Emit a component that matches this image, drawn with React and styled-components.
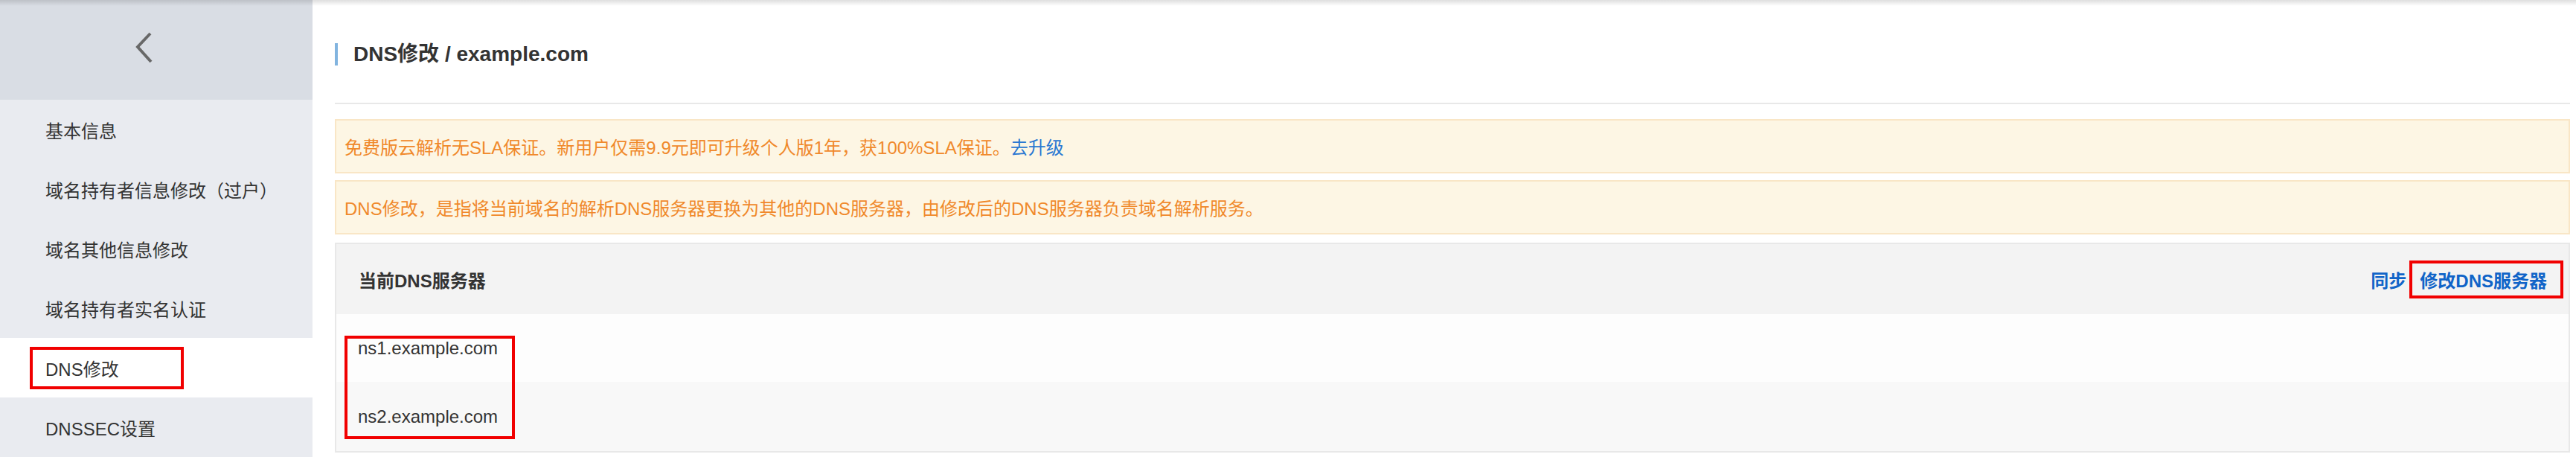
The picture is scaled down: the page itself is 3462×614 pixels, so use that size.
import React from 'react'
import styled, { createGlobalStyle } from "styled-components";

const Global = createGlobalStyle`
  html, body {
    margin: 0;
    padding: 0;
    background: #fff;
  }
  body {
    font-family: "Liberation Sans", Arial, "Noto Sans CJK SC", sans-serif;
    color: #333;
  }
`;

const Page = styled.div`
  position: relative;
  display: flex;
  width: 100vw;
  height: 614px;
  overflow: hidden;
  &::before {
    content: "";
    position: absolute;
    top: 0;
    left: 0;
    right: 0;
    height: 8px;
    background: linear-gradient(rgba(0,0,0,0.13), rgba(0,0,0,0));
    z-index: 2;
  }
`;

const Sidebar = styled.aside`
  width: 420px;
  flex-shrink: 0;
  background: #e9ebf0;
  display: flex;
  flex-direction: column;
`;

const SideHeader = styled.div`
  height: 140px;
  background: #d9dde4;
  display: flex;
  align-items: flex-start;
  padding: 42px 0 0 182px;
  box-sizing: border-box;
`;

const MenuItem = styled.div`
  height: 80px;
  flex-shrink: 0;
  display: flex;
  align-items: center;
  padding-left: 40px;
  background: ${p => (p.$active ? "#fff" : "transparent")};
  font-size: 24px;
  color: #333;
`;

const Label = styled.span`
  display: inline-flex;
  align-items: center;
  box-sizing: border-box;
  height: 57px;
  min-width: ${p => (p.$marked ? "207px" : "0")};
  padding: 0 17px;
  border: 4px solid ${p => (p.$marked ? "#f10000" : "transparent")};
`;

const Main = styled.main`
  flex: 1;
  padding: 0 8px 0 30px;
  display: flex;
  flex-direction: column;
  background: #fff;
`;

const TitleBar = styled.div`
  padding-top: 58px;
  padding-bottom: 50px;
  border-bottom: 2px solid #e8e8e8;
`;

const Title = styled.h2`
  margin: 0;
  border-left: 4px solid #82b4df;
  padding-left: 21px;
  height: 30px;
  line-height: 30px;
  font-size: 28px;
  font-weight: bold;
  color: #333;
`;

const Alert = styled.div`
  margin-top: ${p => p.$gap}px;
  height: 73px;
  box-sizing: border-box;
  background: #fdf6e4;
  border: 2px solid #f9e6c6;
  display: flex;
  align-items: center;
  padding-left: 11px;
  font-size: 24px;
  color: #f0892b;
`;

const Link = styled.a`
  color: ${p => (p.$dark ? "#1064c8" : "#2a78d2")};
  font-weight: ${p => (p.$bold ? "bold" : "normal")};
  text-decoration: none;
  cursor: pointer;
`;

const Card = styled.section`
  margin-top: 11px;
  border: 2px solid #e8e8e8;
`;

const CardHeader = styled.div`
  height: 94px;
  box-sizing: border-box;
  background: #f3f3f3;
  display: flex;
  align-items: center;
  justify-content: space-between;
  padding: 0 7px 0 30px;
`;

const CardTitle = styled.h3`
  margin: 0;
  font-size: 24px;
  font-weight: bold;
  color: #333;
`;

const Actions = styled.div`
  display: flex;
  align-items: center;
  gap: 4px;
  font-size: 24px;
`;

const ActionBox = styled.span`
  display: inline-flex;
  align-items: center;
  height: 51px;
  box-sizing: border-box;
  padding: 0 18px 0 10px;
  border: 4px solid #f10000;
`;

const CardBody = styled.div`
  position: relative;
`;

const Row = styled.div`
  height: ${p => p.$h}px;
  display: flex;
  align-items: center;
  padding-left: 29px;
  background: ${p => (p.$alt ? "#f8f8f8" : "#fdfdfd")};
  font-size: 24px;
  color: #333;
`;

const Marker = styled.div`
  position: absolute;
  left: 11px;
  top: 29px;
  width: 229px;
  height: 139px;
  box-sizing: border-box;
  border: 4px solid #f10000;
  pointer-events: none;
`;

const menu = [
  "基本信息",
  "域名持有者信息修改（过户）",
  "域名其他信息修改",
  "域名持有者实名认证",
  "DNS修改",
  "DNSSEC设置",
];

export default function App() {
  return (
    <>
      <Global />
      <Page>
        <Sidebar>
          <SideHeader>
            <svg width="24" height="44" viewBox="0 0 24 44">
              <polyline points="20,3 3,21 21,41" fill="none" stroke="#686868" strokeWidth="4" />
            </svg>
          </SideHeader>
          {menu.map(m => (
            <MenuItem key={m} $active={m === "DNS修改"}>
              <Label $marked={m === "DNS修改"}>{m}</Label>
            </MenuItem>
          ))}
        </Sidebar>
        <Main>
          <TitleBar>
            <Title>DNS修改 / example.com</Title>
          </TitleBar>
          <Alert $gap={20}>
            免费版云解析无SLA保证。新用户仅需9.9元即可升级个人版1年，获100%SLA保证。<Link>去升级</Link>
          </Alert>
          <Alert $gap={9}>
            DNS修改，是指将当前域名的解析DNS服务器更换为其他的DNS服务器，由修改后的DNS服务器负责域名解析服务。
          </Alert>
          <Card>
            <CardHeader>
              <CardTitle>当前DNS服务器</CardTitle>
              <Actions>
                <Link $bold $dark>同步</Link>
                <ActionBox><Link $bold $dark>修改DNS服务器</Link></ActionBox>
              </Actions>
            </CardHeader>
            <CardBody>
              <Row $h={91}>ns1.example.com</Row>
              <Row $h={93} $alt>ns2.example.com</Row>
              <Marker />
            </CardBody>
          </Card>
        </Main>
      </Page>
    </>
  )
}
